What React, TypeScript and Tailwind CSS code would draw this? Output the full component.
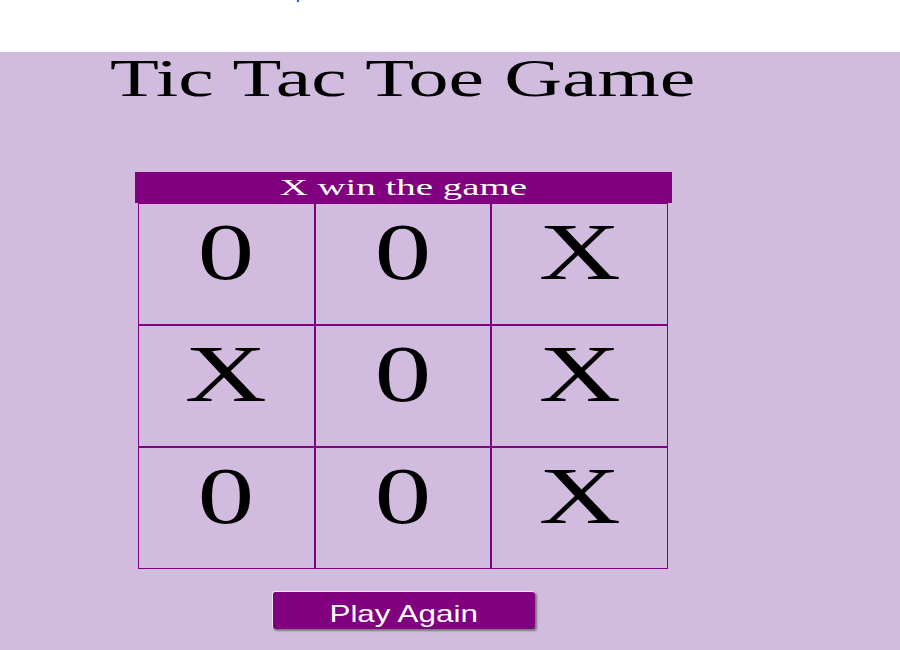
const board = ["0", "0", "X", "X", "0", "X", "0", "0", "X"];

export default function App() {
  return (
    <div className="w-[900px] h-[650px] bg-white font-['Liberation_Serif',serif] text-black overflow-hidden">
      {/* top strip */}
      <div className="h-[52px] bg-white">
        <div className="ml-[297px] w-[2px] h-[2px] bg-blue-600" />
      </div>

      {/* game area */}
      <div className="h-[598px] bg-[#d1bcdf] flex flex-col">
        <h1 className="ml-[110px] text-[53px] leading-[53px] font-normal">
          <span className="inline-block origin-left scale-x-[1.51]">Tic Tac Toe Game</span>
        </h1>

        <div className="mt-[67px] ml-[135px] w-[537px]">
          <div className="h-[31px] bg-[#800080] text-white text-center text-[24px] leading-[31px]">
            <span className="inline-block scale-x-[1.62]">X win the game</span>
          </div>
          <div className="ml-[3px] w-[530px] grid grid-cols-3">
            {board.map((v, i) => (
              <div
                key={i}
                className="h-[122px] border border-[#800080] text-center text-[80px] leading-[96px]"
              >
                <span className="inline-block scale-x-[1.42]">{v}</span>
              </div>
            ))}
          </div>
        </div>

        <button className="mt-[22px] ml-[272px] w-[263px] h-[38px] pt-[7px] rounded-[3px] bg-[#800080] text-white border-t border-l border-[#ece4f0] shadow-[2px_2px_2px_#7a7a7a] font-['Liberation_Sans',sans-serif] text-[24px] leading-[30px]">
          <span className="inline-block scale-x-[1.31]">Play Again</span>
        </button>
      </div>
    </div>
  );
}
